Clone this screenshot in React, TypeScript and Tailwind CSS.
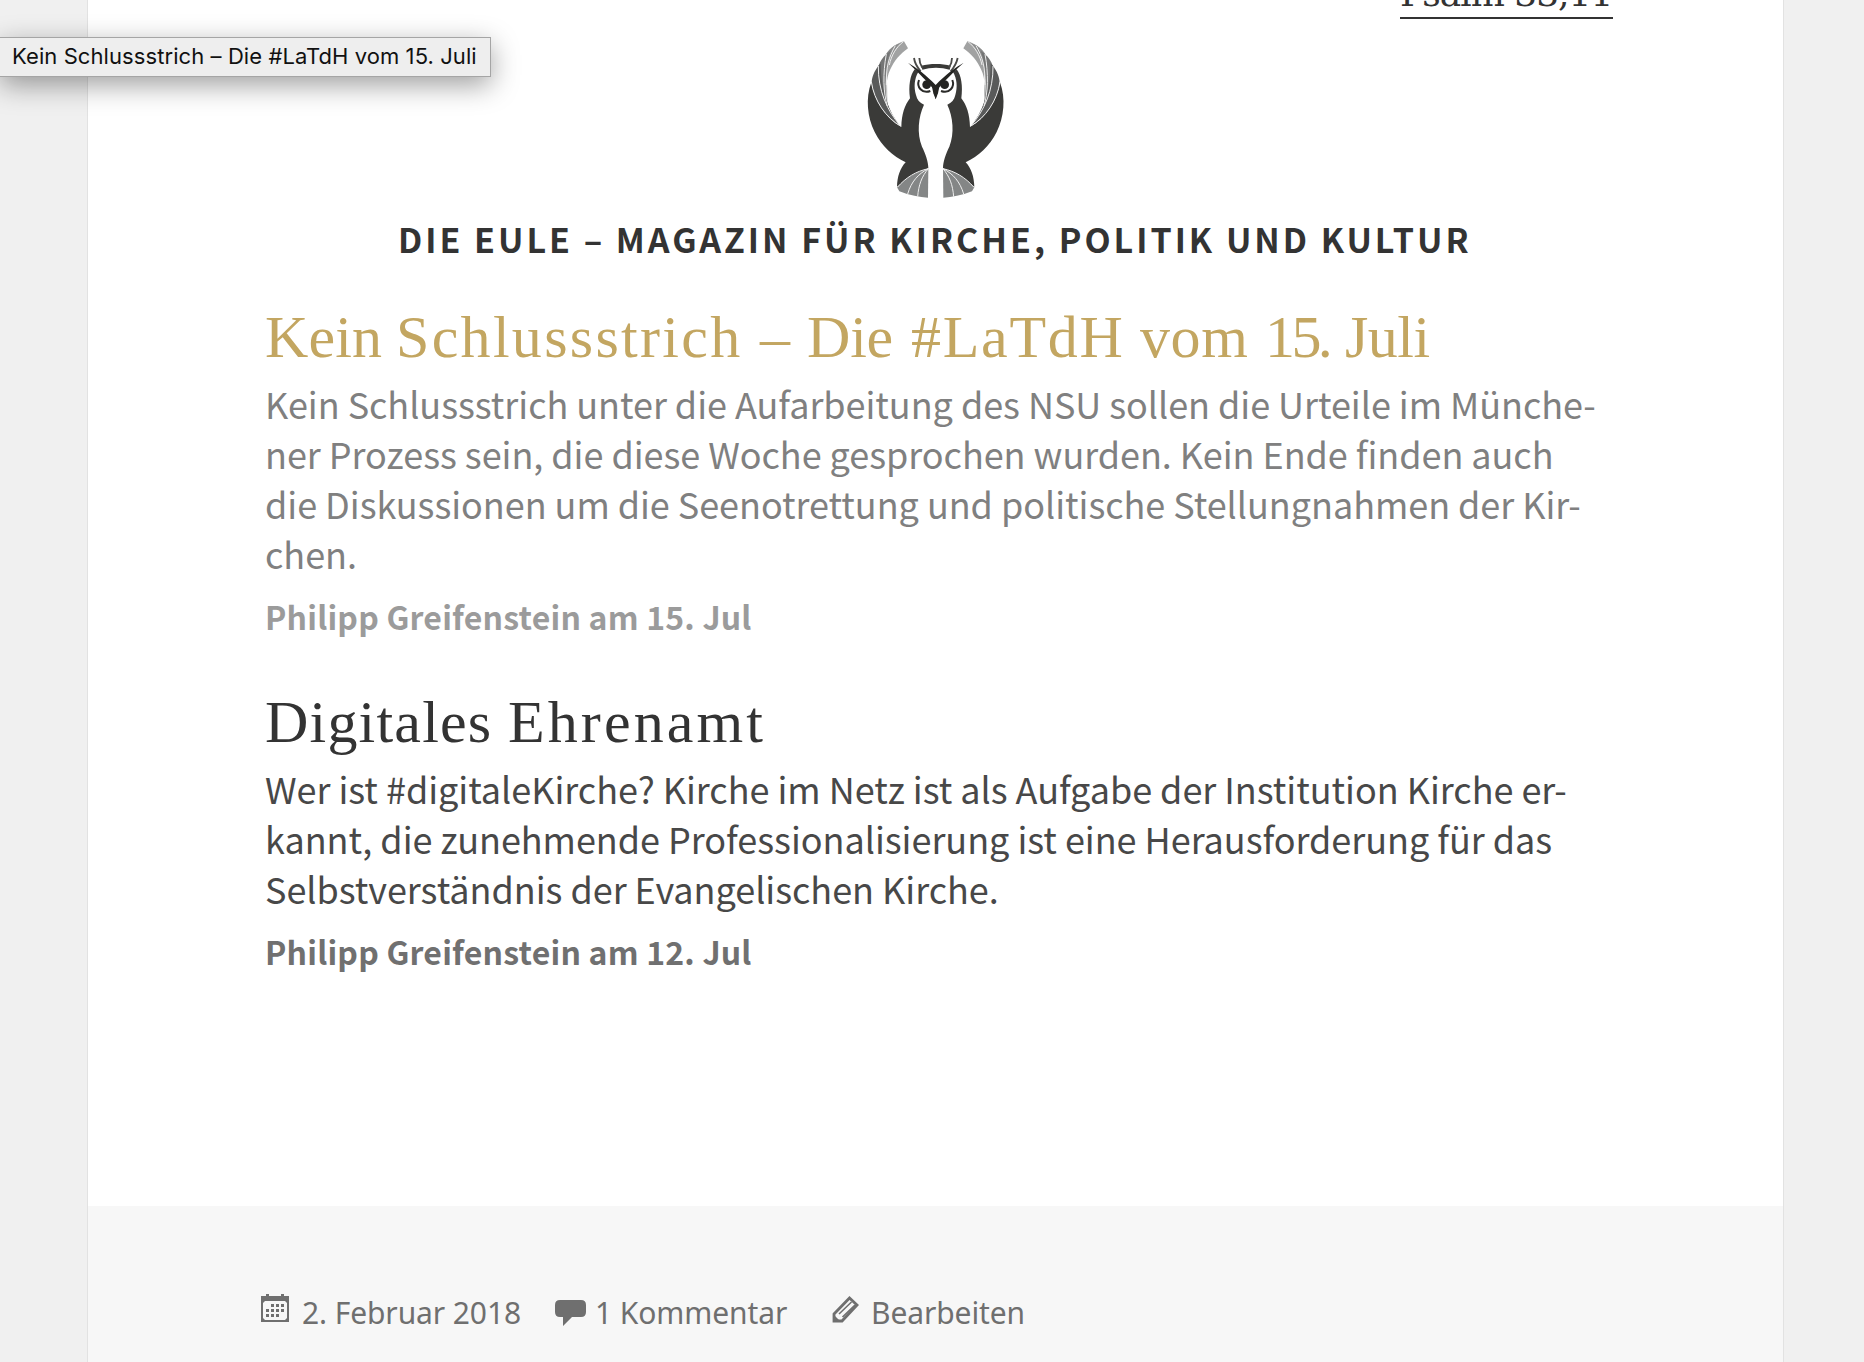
const sans = "font-['Noto_Sans_CJK_SC',sans-serif]";

function Wing() {
  return (
    <g>
      <path d="M64 157C46 205 52 262 74 306C96 350 128 378 167 397C150 415 142 440 141 470L235 414C235 395 226 370 216 350C200 310 205 260 222 224C209 219 201 209 198 195C191 172 193 146 205 126L194 118C180 136 175 168 180 205C164 226 155 252 154 291C110 268 72 210 64 157Z" fill="#3a3a38" />
      <path d="M162 34C140 40 122 52 110 72L112 225C107 185 108 145 120 120C132 93 150 72 174 55Z" fill="#a1a2a2" />
      <path d="M136 46C122 54 112 64 106 76L100 190L112 228C104 190 106 150 114 112C118 86 130 62 150 40Z" fill="#8b8c8c" />
      <path d="M110 72C98 82 90 94 86 108L92 200L148 286C124 255 111 228 108 195C103 150 106 105 122 62Z" fill="#747575" />
      <path d="M86 106C72 126 66 140 65 157C70 208 106 264 150 287C118 250 92 180 92 100Z" fill="#595a5a" />
      <path d="M64 155C72 212 108 264 152 288M85 108C84 180 110 240 150 286M109 72C98 130 100 190 112 228M136 47C116 82 108 112 109 165M160 35C138 52 124 76 118 105" fill="none" stroke="#eeeeee" strokeWidth="3" />
      <path d="M235 416C200 422 165 445 141 472L148 484C180 496 208 502 234 503Z" fill="#848686" />
      <path d="M235 416C198 424 168 442 142 472M235 416C204 432 184 455 173 492M235 416C215 440 206 464 203 500" fill="none" stroke="#eeeeee" strokeWidth="3" />
    </g>
  );
}

function Owl() {
  return (
    <svg className="block h-[180px] w-[170px]" viewBox="0 0 510 540" aria-hidden="true">
      <Wing />
      <g transform="translate(514 0) scale(-1 1)"><Wing /></g>
      <path d="M214 107C240 100 276 100 302 107L299 119C274 111 242 111 217 119Z" fill="#3a3a38" />
      <path d="M192 84C194 98 200 110 212 124M208 84C208 96 211 104 217 113M306 84C306 96 303 104 297 113M323 84C320 98 314 110 302 124" fill="none" stroke="#4a4a48" strokeWidth="5.5" />
      <path d="M174 98C198 112 228 134 257 165C286 134 316 112 341 98C320 116 300 138 284 154L264 176L257 208L250 176L230 154C214 138 194 116 174 98Z" fill="#242422" />
      <path d="M207 150C199 171 216 192 241 183M307 150C315 171 298 192 273 183" fill="none" stroke="#2b2b29" strokeWidth="6" />
      <circle cx="230" cy="164" r="13" fill="#242422" />
      <circle cx="284" cy="164" r="13" fill="#242422" />
      <path d="M245 166H269L264 190L257 208L250 190Z" fill="#242422" />
    </svg>
  );
}

function CalendarIcon() {
  return (
    <svg className="mb-[10px] h-7 w-7" viewBox="0 0 28 28" fill="#6f6f6f">
      <path fillRule="evenodd" d="M0 2H5V0H8V2H20V0H23V2H28V28H0ZM4 7L2 9V24L4 26H24L26 24V9L24 7Z" />
      <path d="M10 10h3v3h-3zM15 10h3v3h-3zM20 10h3v3h-3zM5 15h3v3H5zM10 15h3v3h-3zM15 15h3v3h-3zM20 15h3v3h-3zM5 20h3v3H5zM10 20h3v3h-3zM15 20h3v3h-3z" />
    </svg>
  );
}

export default function App() {
  return (
    <div className="relative h-[1362px] w-[1864px] overflow-hidden bg-[#f0f0f0]">
      <main className="ml-[87px] flex h-full w-[1697px] flex-col border-x border-[#e2e2e2] bg-white">
        <section className="h-[1206px] pl-[177px]">
          <div className="flex h-[30px] items-end pl-[1135px]">
            <a className="mb-[11px] h-[50px] w-[213px] whitespace-nowrap border-b-2 border-[#333] font-['DejaVu_Serif',serif] text-[36px] leading-[49px] tracking-[-1px] text-[#333]">Psalm 33,11</a>
          </div>
          <div className="flex h-[180px] pl-[585px]"><Owl /></div>
          <h2 className={"h-[60px] pl-[133px] whitespace-nowrap text-[34px] font-bold leading-[58px] tracking-[2.99px] text-[#333] " + sans}>DIE EULE – MAGAZIN FÜR KIRCHE, POLITIK UND KULTUR</h2>
          <article className="pt-[34px]">
            <h3 className="h-[74px] whitespace-pre font-['Liberation_Serif',serif] text-[60px] leading-[67px] text-[#c3a661]">
              <span className="inline-block w-[131px] tracking-[0.1px]">Kein </span><span className="inline-block w-[364px] tracking-[2.3px]">Schlussstrich </span><span className="inline-block w-[47px]">– </span><span className="inline-block w-[104px] tracking-[-0.2px]">Die </span><span className="inline-block w-[229px] tracking-[1.7px]">#LaTdH </span><span className="inline-block w-[125px] tracking-[0.6px]">vom </span><span className="inline-block w-[80px] tracking-[-3.6px]">15. </span><span className="inline-block tracking-[-0.5px]">Juli</span>
            </h3>
            <p className={"whitespace-nowrap text-[36px] leading-[50px] tracking-[-0.04px] text-[#808080] " + sans}>Kein Schlussstrich unter die Aufarbeitung des NSU sollen die Urteile im Münche-<br />ner Prozess sein, die diese Woche gesprochen wurden. Kein Ende finden auch<br />die Diskussionen um die Seenotrettung und politische Stellungnahmen der Kir-<br />chen.</p>
            <p className={"pt-[13px] text-[32px] font-bold leading-[50px] tracking-[0.2px] text-[#9b9b9b] " + sans}>Philipp Greifenstein am 15. Jul</p>
          </article>
          <article className="pt-[48px]">
            <h3 className="h-[74px] whitespace-pre font-['Liberation_Serif',serif] text-[60px] leading-[67px] text-[#333]"><span className="inline-block w-[243px] tracking-[1.2px]">Digitales </span><span className="inline-block tracking-[3.1px]">Ehrenamt</span></h3>
            <p className={"whitespace-nowrap text-[36px] leading-[50px] tracking-[-0.03px] text-[#484848] " + sans}>Wer ist #digitaleKirche? Kirche im Netz ist als Aufgabe der Institution Kirche er-<br />kannt, die zunehmende Professionalisierung ist eine Herausforderung für das<br />Selbstverständnis der Evangelischen Kirche.</p>
            <p className={"pt-[13px] text-[32px] font-bold leading-[50px] tracking-[0.2px] text-[#707070] " + sans}>Philipp Greifenstein am 12. Jul</p>
          </article>
        </section>
        <footer className="flex flex-1 items-start bg-[#f7f7f7] pl-[173px] pt-[86px] font-['Noto_Sans',sans-serif] text-[30px] leading-[42px] tracking-[-0.1px] text-[#6f6f6f]">
          <div className="flex w-[294px] items-center gap-[13px] whitespace-nowrap"><CalendarIcon />2. Februar 2018</div>
          <div className="flex w-[277px] items-center gap-[9px] whitespace-nowrap">
            <svg className="h-[26px] w-[31px]" viewBox="0 0 31 26" fill="#6f6f6f"><path d="M5 0H26Q31 0 31 5V12Q31 17 26 17H17L8 26V17H5Q0 17 0 12V5Q0 0 5 0Z" /></svg>1 Kommentar
          </div>
          <div className="flex items-center gap-[12px] whitespace-nowrap">
            <svg className="mb-[8px] h-[27px] w-[27px]" viewBox="0 0 27 27" fill="none" stroke="#6f6f6f" strokeWidth="2.8"><path d="M2 18L17.500 2L25 9L10 25H2Z" /><path d="M7 18L19.500 6M10.500 21L23 9" strokeWidth="1.6" /><path d="M1 18L9 26H1Z" fill="#6f6f6f" stroke="none" /></svg>Bearbeiten
          </div>
        </footer>
      </main>
      <div className="absolute left-0 top-[37px] flex h-[40px] w-[491px] items-center whitespace-nowrap border border-l-0 border-[#a5a5a5] bg-[#eee] pb-[2px] pl-[12px] font-['Inter',sans-serif] text-[22px] tracking-[0.08px] text-[#111] shadow-[0_8px_28px_rgba(0,0,0,0.38)]">Kein Schlussstrich – Die #LaTdH vom 15. Juli</div>
    </div>
  );
}
